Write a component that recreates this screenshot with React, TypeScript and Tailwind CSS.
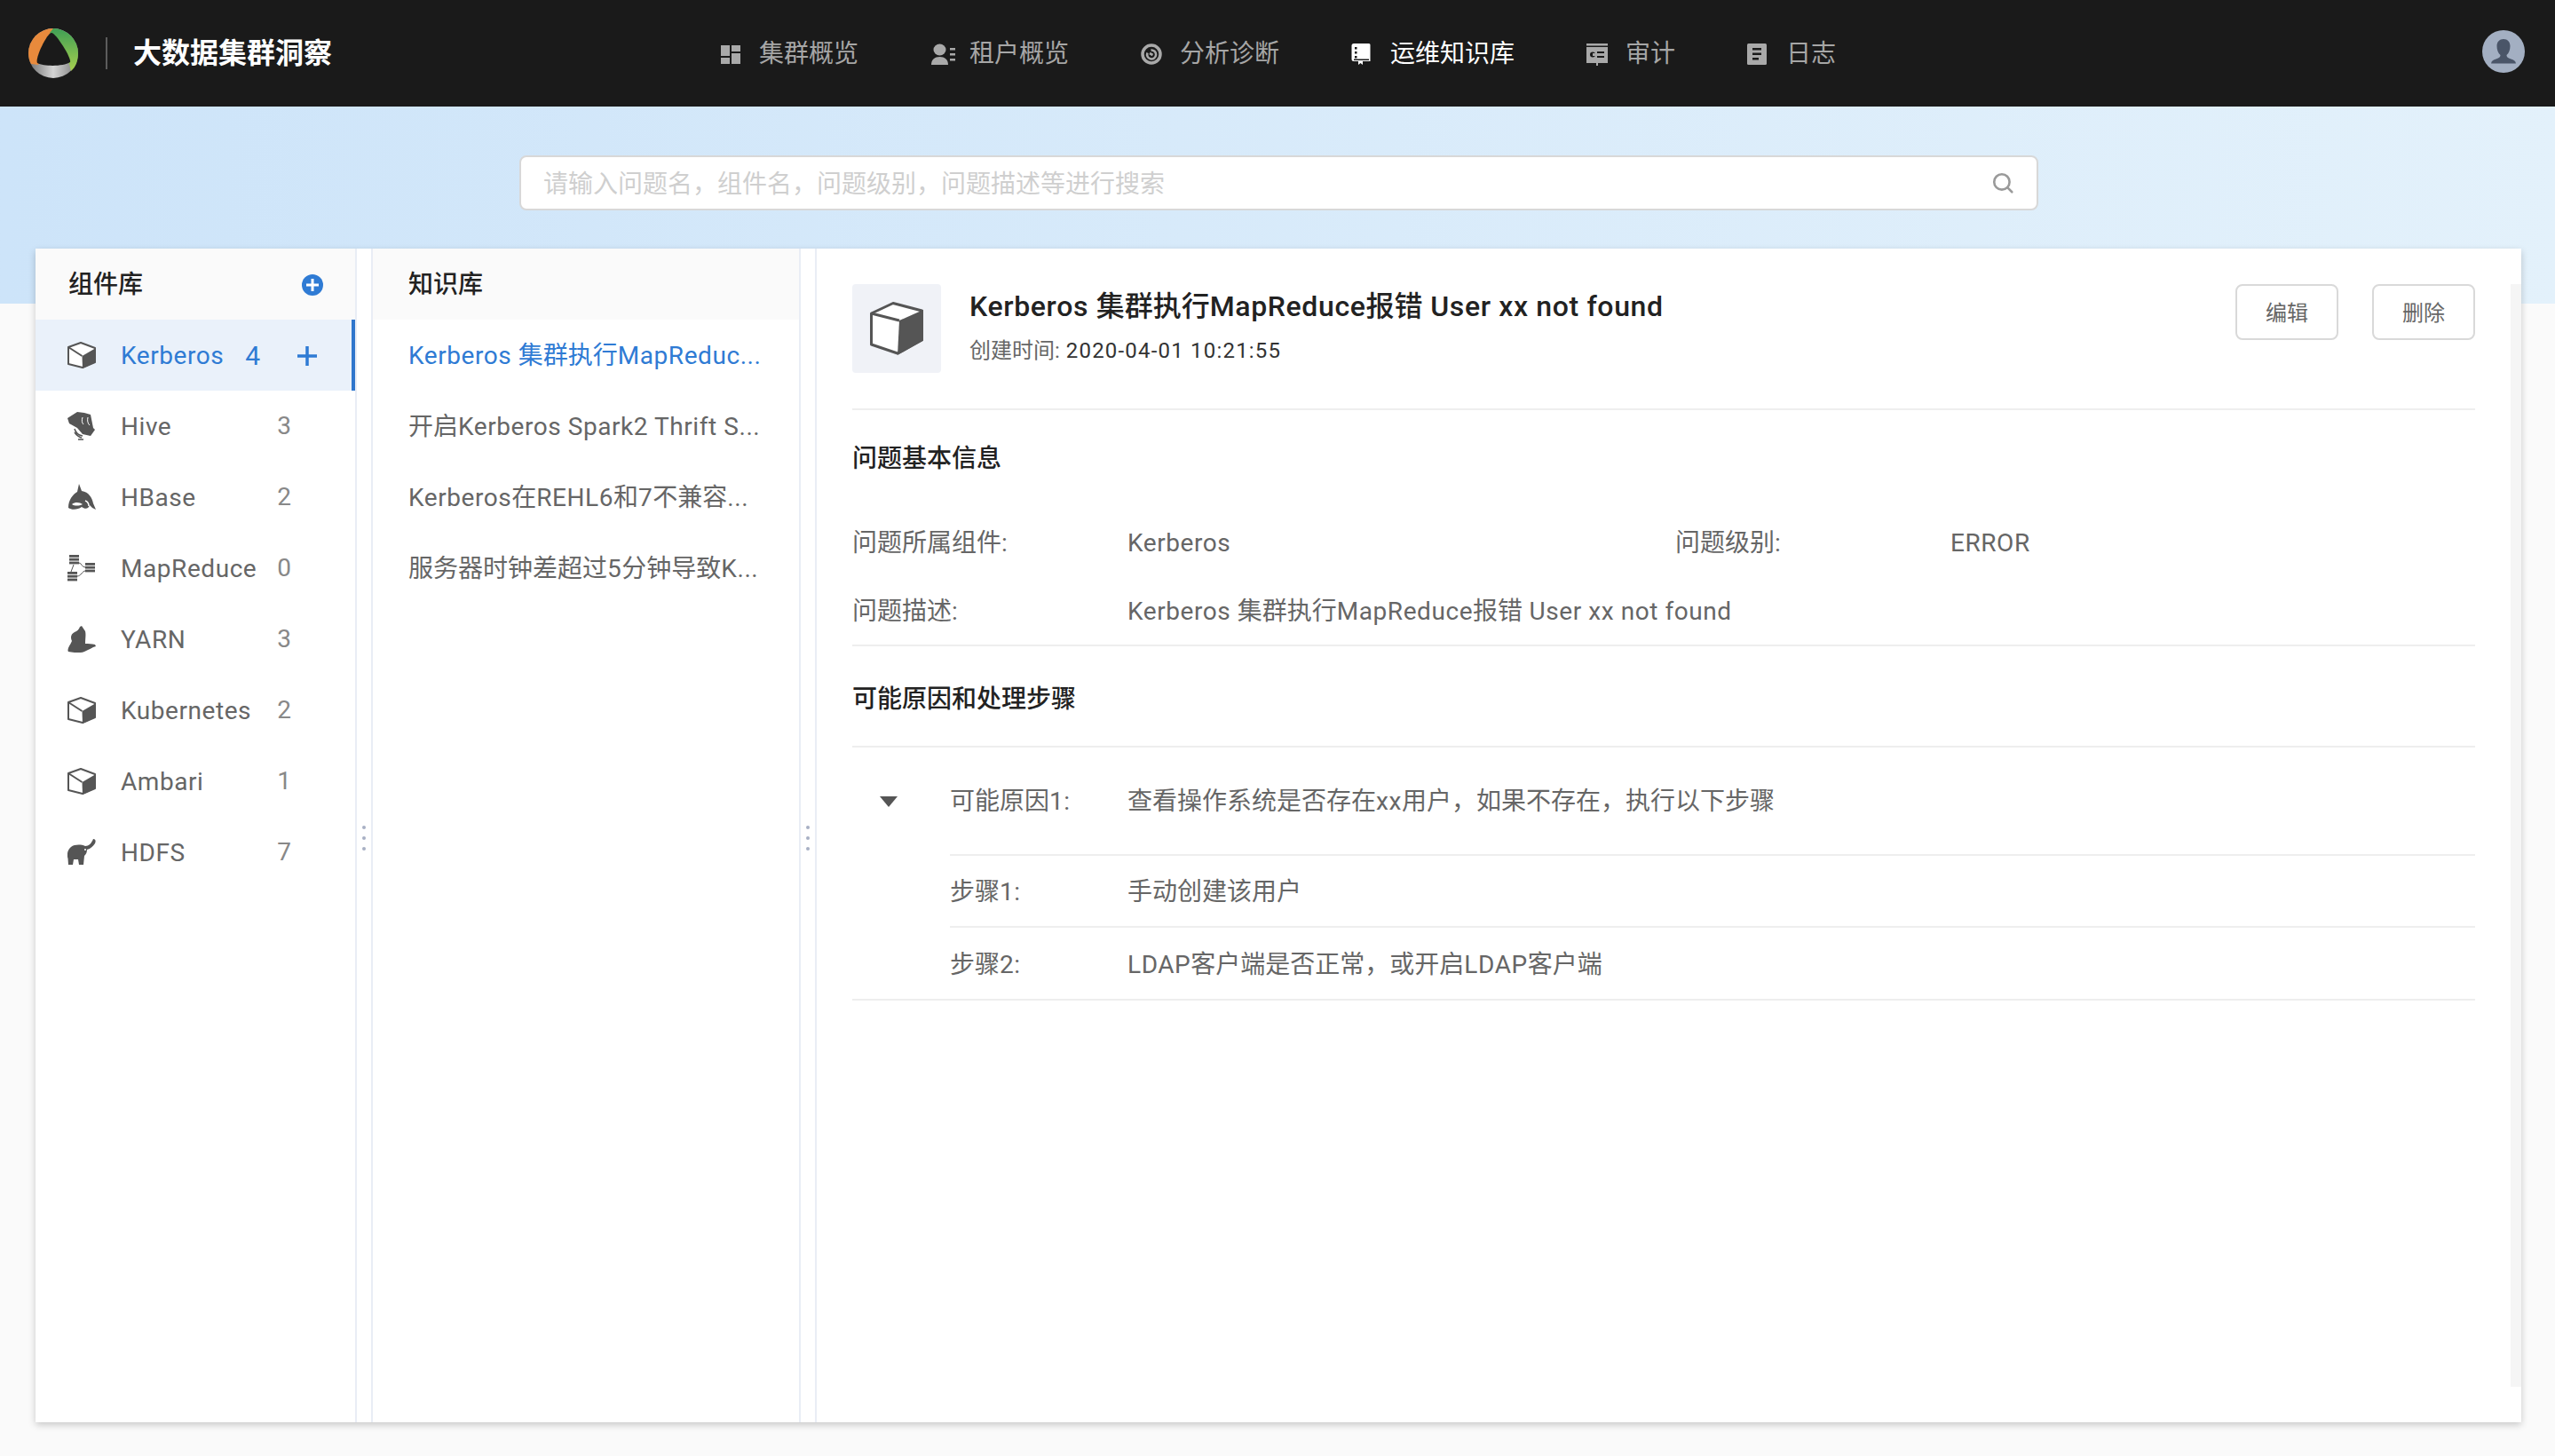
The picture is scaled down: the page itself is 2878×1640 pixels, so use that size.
const NAV_GRAY = '#a9a9a9';

// latin runs sit a bit narrower in Roboto than in the reference, CJK runs are already right
function Mix({ text }: { text: string }) {
  return (
    <>
      {text.split(/([\x00-\x7f]+)/).map((part, i) =>
        /^[\x00-\x7f]+$/.test(part) ? (
          <span key={i} className="tracking-[0.02em]">{part}</span>
        ) : (
          part
        )
      )}
    </>
  );
}

function GridIcon() {
  return (
    <svg width="24" height="24" viewBox="0 0 24 24" fill={NAV_GRAY}>
      <rect x="1" y="2" width="10" height="12" />
      <rect x="13" y="2" width="10" height="7" />
      <rect x="1" y="16" width="10" height="7" />
      <rect x="13" y="11" width="10" height="12" />
    </svg>
  );
}

function TenantIcon() {
  return (
    <svg width="28" height="24" viewBox="0 0 28 24" fill={NAV_GRAY}>
      <ellipse cx="10.5" cy="7" rx="7" ry="6.5" />
      <path d="M1 24c0-6 4-9 9.500-9s9.500 3 9.500 9z" />
      <rect x="22" y="5" width="6" height="2.500" />
      <rect x="22" y="11" width="6" height="2.500" />
      <rect x="22" y="17" width="6" height="2.500" />
    </svg>
  );
}

function TargetIcon() {
  return (
    <svg width="24" height="24" viewBox="0 0 24 24" fill="none" stroke={NAV_GRAY}>
      <circle cx="12" cy="12" r="10" strokeWidth="3.500" />
      <path d="M7.500 10.500a5 5 0 1 0 4-3M10 11l3.500 2" strokeWidth="2.600" />
    </svg>
  );
}

function BookIcon() {
  return (
    <svg width="22" height="26" viewBox="0 0 22 26" fill="#fff">
      <path d="M3 1h17a1.500 1.500 0 0 1 1.500 1.500V21H13v4l-2.500-2L8 25v-4H3a2.500 2.500 0 0 1-2.500-2.500v-15A2.500 2.500 0 0 1 3 1z" />
      <rect x="4" y="5" width="2.500" height="2.500" fill="#1a1a1a" />
      <rect x="4" y="10" width="2.500" height="2.500" fill="#1a1a1a" />
      <rect x="4" y="15" width="2.500" height="2.500" fill="#1a1a1a" />
      <rect x="3" y="18.500" width="17" height="1.500" fill="#1a1a1a" />
    </svg>
  );
}

function AuditIcon() {
  return (
    <svg width="24" height="26" viewBox="0 0 24 26" fill={NAV_GRAY}>
      <rect x="0" y="1" width="24" height="2.500" />
      <rect x="0" y="5" width="24" height="18" />
      <rect x="11" y="23" width="2" height="3" />
      <circle cx="7" cy="13.500" r="3" fill="#1a1a1a" />
      <rect x="7" y="12" width="3" height="3" fill={NAV_GRAY} />
      <rect x="12" y="10" width="8" height="2" fill="#1a1a1a" />
      <rect x="12" y="15" width="8" height="2" fill="#1a1a1a" />
    </svg>
  );
}

function LogIcon() {
  return (
    <svg width="22" height="24" viewBox="0 0 22 24" fill={NAV_GRAY}>
      <rect x="0" y="0" width="22" height="24" rx="1.500" />
      <rect x="6" y="5" width="10" height="2.500" fill="#1a1a1a" />
      <rect x="6" y="10.500" width="10" height="2.500" fill="#1a1a1a" />
      <rect x="6" y="16" width="7" height="2.500" fill="#1a1a1a" />
    </svg>
  );
}

function Logo() {
  return (
    <svg width="56" height="56" viewBox="0 0 56 56">
      <defs>
        <linearGradient id="logoGray" x1="0" y1="0" x2="1" y2="0">
          <stop offset="0" stopColor="#6f6f6f" />
          <stop offset="0.5" stopColor="#d4d4d4" />
          <stop offset="1" stopColor="#777" />
        </linearGradient>
        <linearGradient id="logoGreen" x1="0" y1="0" x2="0" y2="1">
          <stop offset="0" stopColor="#3f9f55" />
          <stop offset="1" stopColor="#a6cf4e" />
        </linearGradient>
      </defs>
      <circle cx="28" cy="28" r="28" fill="url(#logoGray)" />
      <path d="M28 0A28 28 0 0 0 0 28c0 4 1 9 3 12l8 1L30 6z" fill="#e88a3c" />
      <path d="M28 0a28 28 0 0 1 28 28c0 9-3 16-8 20l-2-8L24 5z" fill="url(#logoGreen)" />
      <path d="M26 5C31 5 49 34 47 38c-8 5-29 5-37 1C7 34 21 5 26 5z" fill="#1a1a1a" />
    </svg>
  );
}

function Cube() {
  return (
    <svg width="32" height="30" viewBox="0 0 32 30" className="shrink-0">
      <path d="M1 6 15 1 31 7v16l-14 6-16-4z" fill="#fff" stroke="#555" strokeWidth="2" strokeLinejoin="round" />
      <path d="M16.500 16 32 7v16l-15 7z" fill="#555" />
      <path d="M1 6 16.500 16" stroke="#555" strokeWidth="2" />
    </svg>
  );
}

function HiveIcon() {
  return (
    <svg width="32" height="32" viewBox="0 0 32 32" fill="#555" className="shrink-0">
      <path d="M0 7 11 0l8 1 7 2 3 15 2 2-5 7-9-2-6-7-9-5z" />
      <path d="M8 19c1 4 4 7 9 8M8 23c2 3 4 5 8 6M12 31h6" stroke="#555" strokeWidth="1.500" fill="none" />
      <path d="M17 6c-1 3-1 6 1 8M23 6c-1 4 0 7 2 9" stroke="#fff" strokeWidth="1" fill="none" />
    </svg>
  );
}

function OrcaIcon() {
  return (
    <svg width="32" height="30" viewBox="0 0 32 30" fill="#555" className="shrink-0">
      <path d="M13 0l3 8c8 1 12 8 13 14l3 7-4-2-3-3c-1 4-5 5-9 2-4 3-11 4-15 1 0-9 5-15 10-18z" />
      <path d="M5 23c4-3 9-2 12 0-4 2-9 2-12 0z" fill="#fff" />
      <path d="M20 19c3 1 4 4 4 6" stroke="#fff" strokeWidth="1.500" fill="none" />
    </svg>
  );
}

function TreeIcon() {
  const rack = (x: number, y: number) => (
    <g key={`${x}-${y}`}>
      <rect x={x} y={y} width="11" height="2.800" />
      <rect x={x} y={y + 3.800} width="11" height="2.800" />
      <rect x={x} y={y + 7.600} width="11" height="2.800" />
    </g>
  );
  return (
    <svg width="32" height="30" viewBox="0 0 32 30" fill="#555" className="shrink-0">
      {rack(2, 0)}
      {rack(20, 9)}
      {rack(0, 19)}
      <path d="M7 11 4 19M13 9c3 0 3 5 7 5M11 24c4 0 6-6 9-6" stroke="#555" strokeWidth="1" fill="none" />
    </svg>
  );
}

function YarnIcon() {
  return (
    <svg width="32" height="30" viewBox="0 0 32 30" fill="#555" className="shrink-0">
      <path d="M14 1l2-1 4 6c1 4 0 8 0 14 4 0 7 0 11 1l1 2c-4 1-8 4-13 6-5 2-13 1-18 0-2-3 2-7 4-12-2-4-1-8 3-10 3-1 5-3 6-6z" />
    </svg>
  );
}

function ElephantIcon() {
  return (
    <svg width="32" height="30" viewBox="0 0 32 30" fill="#555" className="shrink-0">
      <path d="M29 0c3 0 3 3 2 5-2 3-5 6-9 7 0 3-1 5-3 7l-1 10h-5l-1-6H7l-1 6H1l-.5-7C-1 18 0 12 4 9c4-3 11-3 16-1 4 0 7-3 9-8z" />
      <circle cx="20" cy="12" r="1" fill="#fff" />
    </svg>
  );
}

const components = [
  { name: 'Kerberos', count: 4, icon: <Cube />, active: true },
  { name: 'Hive', count: 3, icon: <HiveIcon /> },
  { name: 'HBase', count: 2, icon: <OrcaIcon /> },
  { name: 'MapReduce', count: 0, icon: <TreeIcon /> },
  { name: 'YARN', count: 3, icon: <YarnIcon /> },
  { name: 'Kubernetes', count: 2, icon: <Cube /> },
  { name: 'Ambari', count: 1, icon: <Cube /> },
  { name: 'HDFS', count: 7, icon: <ElephantIcon /> },
];

const articles = [
  'Kerberos 集群执行MapReduc...',
  '开启Kerberos Spark2 Thrift S...',
  'Kerberos在REHL6和7不兼容...',
  '服务器时钟差超过5分钟导致K...',
];

const navItems = [
  { label: '集群概览', icon: <GridIcon /> },
  { label: '租户概览', icon: <TenantIcon /> },
  { label: '分析诊断', icon: <TargetIcon /> },
  { label: '运维知识库', icon: <BookIcon />, active: true },
  { label: '审计', icon: <AuditIcon /> },
  { label: '日志', icon: <LogIcon /> },
];

function Splitter() {
  return (
    <div className="w-[20px] shrink-0 border-x-2 border-[#e9edf5] flex flex-col items-center justify-center gap-[8px] pt-[6px]">
      <span className="w-[4px] h-[4px] rounded-full bg-[#a8b0c4]" />
      <span className="w-[4px] h-[4px] rounded-full bg-[#a8b0c4]" />
      <span className="w-[4px] h-[4px] rounded-full bg-[#a8b0c4]" />
    </div>
  );
}

export default function App() {
  return (
    <div className="w-[2878px] h-[1640px] overflow-hidden bg-[#fafafa] text-[28px] text-[#666] font-['Roboto','Noto_Sans_CJK_SC',sans-serif]">
      {/* top bar */}
      <header className="h-[120px] bg-[#1a1a1a] flex items-center relative">
        <div className="pl-[32px] flex items-center">
          <Logo />
          <div className="w-[2px] h-[36px] bg-[#5c5c5c] ml-[31px] mr-[29px]" />
          <span className="text-[32px] font-bold text-white leading-none">大数据集群洞察</span>
        </div>
        <nav className="absolute left-[811px] top-0 h-[120px] flex items-center gap-[81px] pt-[1px]">
          {navItems.map((item) => (
            <div key={item.label} className={`flex items-center ${item.active ? 'text-white' : 'text-[#a6a6a6]'}`}>
              <div className="w-[44px] flex items-center">{item.icon}</div>
              <span className="leading-none">{item.label}</span>
            </div>
          ))}
        </nav>
        <div className="absolute left-[2796px] top-[34px] w-[48px] h-[48px] rounded-full bg-[#a3afc2] overflow-hidden">
          <svg viewBox="0 0 48 48" width="48" height="48" fill="#4a5568">
            <path d="M24 10c4.500 0 7.500 3 7.500 8 0 4-1.500 8-4 10 0 2 1 3 5 4.500 3 1 5 2 5.500 5h-28c.5-3 2.500-4 5.500-5 4-1.500 5-2.500 5-4.500-2.500-2-4-6-4-10 0-5 3-8 7.500-8z" />
          </svg>
        </div>
      </header>

      {/* search band */}
      <div className="h-[222px] bg-gradient-to-r from-[#cde4f9] to-[#e3f1fb] flex justify-center pt-[55px]">
        <div className="w-[1711px] h-[62px] ml-[3px] bg-white border-2 border-[#d8d8d8] rounded-[8px] flex items-center justify-between pl-[25px] pr-[25px]">
          <span className="text-[#cfcfcf] pt-[3px]">请输入问题名，组件名，问题级别，问题描述等进行搜索</span>
          <svg width="26" height="26" viewBox="0 0 24 24" fill="none" stroke="#9a9a9a" strokeWidth="2.400" strokeLinecap="round">
            <circle cx="11" cy="11" r="8" />
            <path d="m17 17 4.500 4.500" />
          </svg>
        </div>
      </div>

      {/* main card */}
      <main className="ml-[40px] -mt-[62px] w-[2800px] h-[1322px] bg-white shadow-[0_3px_8px_rgba(0,0,0,0.2)] flex relative">
        <section className="w-[360px] shrink-0">
          <div className="h-[80px] bg-[#fafafa] flex items-center justify-between pl-[37px] pr-[36px] pt-[2px]">
            <span className="font-medium text-[#222]">组件库</span>
            <span className="w-[24px] h-[24px] rounded-full bg-[#2f7bd4] flex items-center justify-center">
              <svg width="14" height="14" viewBox="0 0 14 14" stroke="#fff" strokeWidth="3"><path d="M7 0v14M0 7h14" /></svg>
            </span>
          </div>
          {components.map((c) => (
            <div
              key={c.name}
              className={`h-[80px] flex items-center pl-[36px] relative ${c.active ? 'bg-[#eaf1fa] text-[#2f7bd4] border-r-4 border-[#2f76cc]' : ''}`}
            >
              {c.icon}
              <span className="ml-[28px] pt-[2px] tracking-[0.02em]">{c.name}</span>
              {c.active ? (
                <>
                  <span className="absolute right-[103px] text-[30px]">{c.count}</span>
                  <svg className="absolute right-[39px] mt-[2px]" width="22" height="22" viewBox="0 0 22 22" stroke="#2f7bd4" strokeWidth="3.500"><path d="M11 0v22M0 11h22" /></svg>
                </>
              ) : (
                <span className="absolute right-[72px] text-[#888]">{c.count}</span>
              )}
            </div>
          ))}
        </section>

        <Splitter />

        <section className="w-[480px] shrink-0">
          <div className="h-[80px] bg-[#fafafa] flex items-center pl-[40px] pt-[2px]">
            <span className="font-medium text-[#222]">知识库</span>
          </div>
          {articles.map((a, i) => (
            <div key={a} className={`h-[80px] flex items-center pl-[40px] pt-[2px] whitespace-nowrap ${i === 0 ? 'text-[#2f7bd4]' : ''}`}>
              <span><Mix text={a} /></span>
            </div>
          ))}
        </section>

        <Splitter />

        <section className="flex-1 pl-[40px] pr-[52px] pt-[40px] relative">
          <div className="flex h-[142px] border-b-2 border-[#eee]">
            <div className="w-[100px] h-[100px] rounded-[4px] bg-[#f0f2f7] flex items-center justify-center">
              <svg width="60" height="60" viewBox="0 0 60 60">
                <path d="M1.500 13 26 1.500 58.500 10v33L31 58 1.500 48z" fill="#fff" stroke="#555" strokeWidth="3" strokeLinejoin="round" />
                <path d="M33 21 60 9v34.500L31 60z" fill="#555" />
                <path d="M1.500 13 33 21" stroke="#555" strokeWidth="3" />
              </svg>
            </div>
            <div className="ml-[32px] flex-1">
              <div className="text-[32px] font-medium text-[#222] leading-[50px]"><Mix text="Kerberos 集群执行MapReduce报错 User xx not found" /></div>
              <div className="text-[24px] leading-[34px] mt-[8px]">
                创建时间: <span className="ml-[1px] text-[#333] tracking-[0.05em]">2020-04-01 10:21:55</span>
              </div>
            </div>
            <div className="flex gap-[38px]">
              <button className="w-[116px] h-[63px] rounded-[8px] border-2 border-[#d9d9d9] bg-white text-[24px] text-[#666] pt-[2px]">编辑</button>
              <button className="w-[116px] h-[63px] rounded-[8px] border-2 border-[#d9d9d9] bg-white text-[24px] text-[#666] pt-[2px]">删除</button>
            </div>
          </div>

          <div className="h-[110px] flex items-center font-medium text-[#222]">问题基本信息</div>
          <div className="flex items-center h-[74px] pt-[5px]">
            <span className="w-[310px]">问题所属组件:</span>
            <span className="w-[617px] tracking-[0.02em]">Kerberos</span>
            <span className="w-[310px]">问题级别:</span>
            <span className="tracking-[0.02em]">ERROR</span>
          </div>
          <div className="flex items-center h-[82px] border-b-2 border-[#eee] pt-[6px]">
            <span className="w-[310px]">问题描述:</span>
            <span><Mix text="Kerberos 集群执行MapReduce报错 User xx not found" /></span>
          </div>

          <div className="h-[114px] flex items-center font-medium text-[#222] border-b-2 border-[#eee] pt-[8px]">可能原因和处理步骤</div>

          <div className="flex items-center h-[122px]">
            <div className="w-[110px] pl-[31px]">
              <svg width="20" height="12" viewBox="0 0 20 12" fill="#555"><path d="M0 0h20L10 12z" /></svg>
            </div>
            <div className="flex-1 flex items-center self-stretch border-b-2 border-[#eee] pt-[2px]">
              <span className="w-[200px]"><Mix text="可能原因1:" /></span>
              <span><Mix text="查看操作系统是否存在xx用户，如果不存在，执行以下步骤" /></span>
            </div>
          </div>
          <div className="ml-[110px] h-[81px] flex items-center border-b-2 border-[#eee] pt-[2px]">
            <span className="w-[200px]"><Mix text="步骤1:" /></span>
            <span>手动创建该用户</span>
          </div>
          <div className="h-[82px] flex items-center border-b-2 border-[#eee] pl-[110px] pt-[4px]">
            <span className="w-[200px]"><Mix text="步骤2:" /></span>
            <span><Mix text="LDAP客户端是否正常，或开启LDAP客户端" /></span>
          </div>

          <div className="absolute right-0 top-[40px] bottom-[40px] w-[12px] bg-[#f5f5f5]" />
        </section>
      </main>
    </div>
  );
}
